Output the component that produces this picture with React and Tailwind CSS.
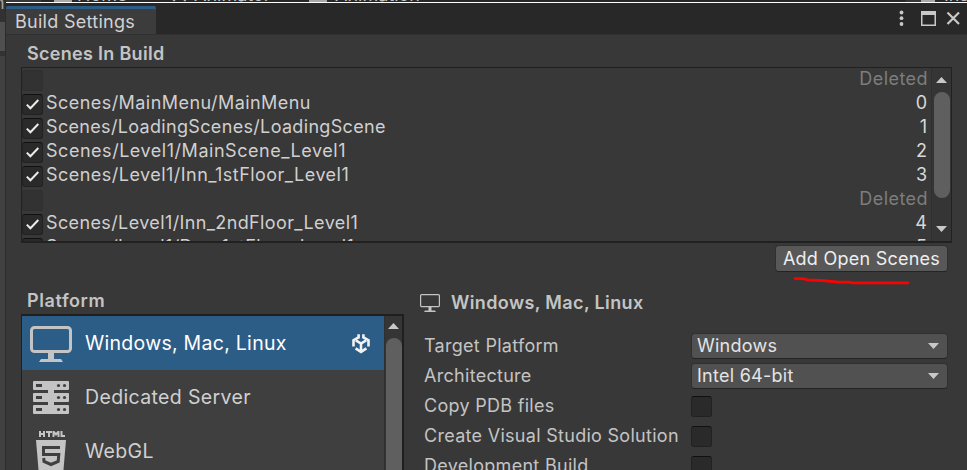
const scenes = [
  { deleted: true },
  { path: "Scenes/MainMenu/MainMenu", index: 0, spacing: "tracking-[0.45px]" },
  { path: "Scenes/LoadingScenes/LoadingScene", index: 1, spacing: "tracking-[0.33px]" },
  { path: "Scenes/Level1/MainScene_Level1", index: 2, spacing: "tracking-[0.53px]" },
  { path: "Scenes/Level1/Inn_1stFloor_Level1", index: 3, spacing: "tracking-[0.47px]" },
  { deleted: true },
  { path: "Scenes/Level1/Inn_2ndFloor_Level1", index: 4, spacing: "tracking-[0.38px]" },
  { path: "Scenes/Level1/Den_1stFloor_Level1", index: 5, spacing: "tracking-[0.38px]" },
];

function Check({ checked, disabled }) {
  return (
    <span
      className={
        disabled
          ? "block h-[21px] w-[21px] shrink-0 rounded-[3px] border border-[#2f2f2f] bg-[#323232]"
          : "block h-[21px] w-[21px] shrink-0 rounded-[3px] border border-[#212121] border-t-[#101010] bg-[#2a2a2a]"
      }
    >
      {checked && (
        <svg className="block h-[19px] w-[19px]" viewBox="0 0 19 19" fill="none">
          <path d="M3.8 9.600 7.400 13.300 15.300 5" stroke="#ececec" strokeWidth="2" />
        </svg>
      )}
    </span>
  );
}

function Arrow({ down }) {
  return (
    <svg className="block h-[6px] w-[11px] shrink-0" viewBox="0 0 11 6">
      <path d={down ? "M0 0H11L5.5 6Z" : "M0 6H11L5.5 0Z"} fill="#c8c8c8" />
    </svg>
  );
}

function Select({ value }) {
  return (
    <div className="flex h-[26px] w-[257px] shrink-0 items-center justify-between rounded-[4px] border border-[#303030] border-b-[#242424] bg-[#515151] pl-[5px] pr-[8px] tracking-[0.26px] text-[#e4e4e4]">
      <span>{value}</span>
      <Arrow down />
    </div>
  );
}

function MonitorLarge() {
  return (
    <svg className="mt-[2px] block h-9 w-[42px]" viewBox="0 0 42 36">
      <rect x="1.5" y="1.5" width="39" height="24" rx="3" fill="none" stroke="#c4c4c4" strokeWidth="3" />
      <path d="M18 26h6v7h7l2 3H9l2-3h7Z" fill="#c4c4c4" />
    </svg>
  );
}

function MonitorSmall() {
  return (
    <svg className="block h-[18px] w-5" viewBox="0 0 20 18">
      <rect x=".6" y=".6" width="18.8" height="12" rx="1" fill="none" stroke="#c4c4c4" strokeWidth="1.2" />
      <path d="M8.5 13h3v3.5H15L16 18H4l1-1.500h3.500Z" fill="#c4c4c4" />
    </svg>
  );
}

function UnityMark() {
  return (
    <svg className="mr-[14px] mt-[2px] block h-5 w-[18px] shrink-0" viewBox="0 0 18 20" fill="none">
      <g stroke="#f2f2f2" strokeWidth="2.600">
        <path d="M6.600 .3V3.400L1.500 6.200V12.600" />
        <path d="M11.400 .3V3.400L16.500 6.200V12.600" />
        <path d="M3.600 14.300 9 17.900 14.400 14.300" />
        <path d="M3.800 6.400 9 9.500 14.200 6.400M9 9.500V17" />
      </g>
    </svg>
  );
}

function ServerIcon() {
  return (
    <svg className="block h-[33px] w-9" viewBox="0 0 36 33">
      <path d="M15 8h6v18h-6Z" fill="#c4c4c4" />
      {[0, 12, 24].map((y) => (
        <g key={y}>
          <rect y={y} width="36" height="9" rx="1" fill="#c4c4c4" />
          <rect x="3" y={y + 3} width="6" height="3" fill="#3f3f3f" />
          <circle cx="25.500" cy={y + 4.5} r="1.600" fill="#3f3f3f" />
          <circle cx="31.500" cy={y + 4.5} r="1.600" fill="#3f3f3f" />
        </g>
      ))}
    </svg>
  );
}

function WebIcon() {
  return (
    <svg className="mt-[5px] block h-[45px] w-[30px]" viewBox="0 0 30 45">
      <g fill="none" stroke="#c4c4c4" strokeWidth="2">
        <path d="M4 0v6M8 0v6M4 3h4M10 1h6M13 1v5M17.500 6V0.500L20 3.500 22.500 0.500V6M25.500 0v5H29" />
      </g>
      <path d="M0 9h30l-2.700 32L15 45 2.700 41Z" fill="#c4c4c4" />
      <path d="M24 16.500H7.500v7H22.800L22.200 30.500 15 33.500 8 30.500 7.700 27" fill="none" stroke="#3f3f3f" strokeWidth="3" />
    </svg>
  );
}

function Platform({ icon, name, selected }) {
  return (
    <div
      className={
        selected
          ? "flex h-[54px] shrink-0 items-center bg-[#2c5d87] tracking-[0.28px] text-white"
          : "flex h-[54px] shrink-0 items-center tracking-[0.36px] text-[#d0d0d0]"
      }
    >
      <div className="flex w-[58px] shrink-0 justify-center">{icon}</div>
      <span className="grow pl-[5px] text-[19.5px]">{name}</span>
      {selected && <UnityMark />}
    </div>
  );
}

function Field({ label, children }) {
  return (
    <div className="flex h-[30px] items-center">
      <span className="w-[267px] shrink-0 tracking-[0.29px]">{label}</span>
      {children}
    </div>
  );
}

export default function App() {
  return (
    <div className="flex h-[470px] w-[967px] overflow-hidden bg-[#383838] font-['Inter',sans-serif] text-[18px] leading-6 whitespace-nowrap text-[#c4c4c4]">
      {/* Edge of the editor behind the window */}
      <div className="flex w-[6px] shrink-0 flex-col overflow-hidden border-r border-[#2c2c2c] bg-[#383838]">
        <div className="h-[22px] shrink-0 overflow-hidden bg-[#323232]">
          <span className="-ml-[6px] -mt-[9px] block text-[#a0a0a0]">n</span>
        </div>
        <div className="h-[29px] shrink-0 bg-[#4f4f4f]" />
        <div className="h-[5px] shrink-0 bg-[#333333]" />
        <div className="grow bg-[#414141]" />
      </div>

      <div className="flex w-[961px] shrink-0 flex-col">
        <div className="flex h-[2px] shrink-0 overflow-hidden bg-[#282828]">
          <div className="w-[35px] shrink-0 bg-[#383838]" />
          <div className="ml-[13px] mr-[5px] w-[18px] shrink-0 bg-[#a8a8a8]" />
          <span className="-mt-[17px] w-[95px] shrink-0">Home</span>
          <span className="-mt-[17px] w-[22px] shrink-0">⁙</span>
          <span className="-mt-[17px] w-[115px] shrink-0">Animator</span>
          <div className="mr-[8px] w-[18px] shrink-0 bg-[#a8a8a8]" />
          <span className="-mt-[17px] w-[571px] shrink-0">Animation</span>
          <div className="w-[15px] shrink-0 bg-[#383838]" />
          <div className="mr-[9px] w-[14px] shrink-0 bg-[#a8a8a8]" />
          <span className="-mt-[17px] shrink-0">Ins</span>
        </div>

        {/* Title bar */}
        <div className="flex h-[32px] shrink-0 justify-between border-t border-white bg-[#282828]">
          <div className="mt-[3px] w-[150px] shrink-0 rounded-t-[2px] border-t-[3px] border-[#2c5d87] bg-[#3c3c3c] pt-px pl-[9px] tracking-[0.28px] text-[#d2d2d2]">
            Build Settings
          </div>
          <div className="flex items-center pr-[7px] pb-[2px]">
            <svg className="block h-4 w-[62px]" viewBox="0 0 62 16" fill="none">
              <g fill="#c8c8c8">
                <circle cx="3.500" cy="2.500" r="1.900" />
                <circle cx="3.500" cy="8.200" r="1.900" />
                <circle cx="3.500" cy="14" r="1.900" />
              </g>
              <path d="M23 1h15v15H23ZM24.500 5v9.500h12V5Z" fill="#c8c8c8" fillRule="evenodd" />
              <path d="M49.500 2.500l11.500 11.500M61 2.500L49.500 14" stroke="#c8c8c8" strokeWidth="2.200" />
            </svg>
          </div>
        </div>

        <div className="flex grow flex-col border-t border-[#303030] pl-[15px]">
          <h2 className="mt-[7px] h-[25px] pl-[6px] font-semibold tracking-[0.3px]">Scenes In Build</h2>

          {/* Scene list */}
          <div className="flex h-[176px] w-[931px] shrink-0 overflow-hidden border border-b-2 border-[#212121]">
            <div className="-mt-px flex grow flex-col">
              {scenes.map((s, i) => (
                <div key={i} className="flex h-6 shrink-0 items-center">
                  <div className="w-6 shrink-0 pt-[3px]">
                    <Check checked={!s.deleted} disabled={s.deleted} />
                  </div>
                  <span className={`grow text-[#d0d0d0] ${s.spacing ?? ""}`}>{s.path}</span>
                  <span className={s.deleted ? "pr-[3px] tracking-[0.45px] text-[#7d7d7d]" : "pr-1 text-[#d8d8d8]"}>
                    {s.deleted ? "Deleted" : s.index}
                  </span>
                </div>
              ))}
            </div>
            <div className="flex w-5 shrink-0 flex-col items-center border-l border-[#2f2f2f] bg-[#353535] pt-[9px] pb-[9px]">
              <Arrow />
              <div className="mt-[9px] mb-auto h-[106px] w-4 rounded-full bg-[#5f5f5f]" />
              <Arrow down />
            </div>
          </div>

          <div className="relative mt-[2px] flex h-[27px] w-[927px] shrink-0 justify-end">
            <button className="h-[27px] w-[173px] rounded-[4px] border border-[#303030] border-b-[#242424] bg-[#585858] leading-6 tracking-[0.25px] text-[#eeeeee]">
              Add Open Scenes
            </button>
            <svg className="absolute top-[30px] left-[772px] h-3 w-[118px]" viewBox="0 0 118 12" fill="none">
              <path d="M2 3.500l9 .3 3 1 17 .8 14 1.500h11l4 .8h55" stroke="#ff0000" strokeWidth="2.700" strokeLinecap="round" strokeLinejoin="round" />
            </svg>
          </div>

          <div className="flex grow">
            <div className="flex h-[198px] w-[383px] shrink-0 flex-col">
              <h2 className="mt-[17px] mb-[1px] h-[24px] shrink-0 pl-[6px] font-semibold tracking-[0.6px]">Platform</h2>
              <div className="flex grow overflow-hidden border-t-2 border-r-2 border-l border-[#1f1f1f] bg-[#3f3f3f]">
                <div className="flex grow flex-col">
                  <Platform selected icon={<MonitorLarge />} name="Windows, Mac, Linux" />
                  <Platform icon={<ServerIcon />} name="Dedicated Server" />
                  <Platform icon={<WebIcon />} name="WebGL" />
                </div>
                <div className="flex w-[18px] shrink-0 flex-col items-center border-l border-[#2f2f2f] bg-[#353535] pt-[7px]">
                  <Arrow />
                  <div className="mt-[9px] w-4 grow rounded-t-full bg-[#5f5f5f]" />
                </div>
              </div>
            </div>

            <div className="ml-4 flex h-[198px] shrink-0 flex-col overflow-hidden">
              <div className="mt-[19px] mb-[16px] flex h-6 shrink-0 items-center gap-[11px]">
                <MonitorSmall />
                <h2 className="font-semibold tracking-[0.38px]">Windows, Mac, Linux</h2>
              </div>
              <div className="flex h-[150px] shrink-0 flex-col pl-1">
                <Field label="Target Platform"><Select value="Windows" /></Field>
                <Field label="Architecture"><Select value="Intel 64-bit" /></Field>
                <Field label="Copy PDB files"><Check /></Field>
                <Field label="Create Visual Studio Solution"><Check /></Field>
                <Field label="Development Build"><Check /></Field>
              </div>
            </div>
          </div>
        </div>
      </div>
    </div>
  );
}
